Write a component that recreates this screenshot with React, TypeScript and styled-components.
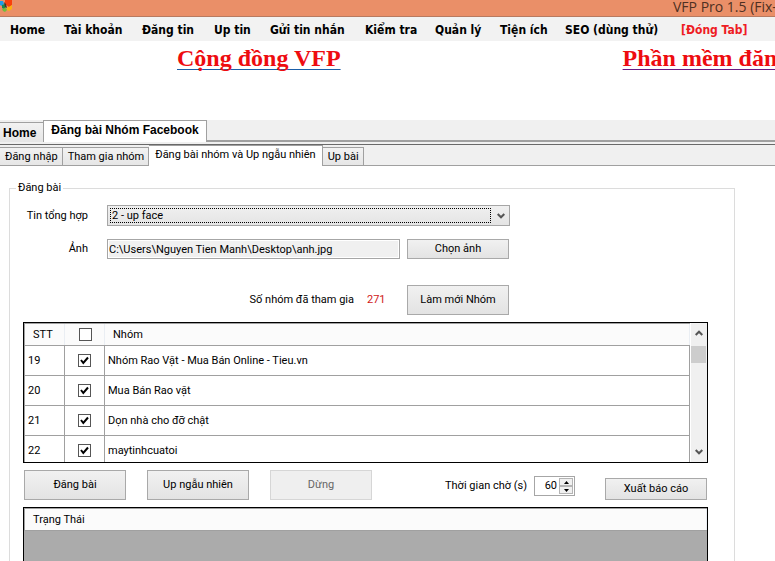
import React from 'react';
import styled, { createGlobalStyle, css } from 'styled-components';

const GlobalStyle = createGlobalStyle`
  *, *::before, *::after { box-sizing: border-box; }
  body { margin: 0; background: #fff; overflow: hidden; }
  button, input, select { font: inherit; color: inherit; border-radius: 0; }
`;

const Window = styled.div`
  height: 100vh;
  display: flex;
  flex-direction: column;
  overflow: hidden;
  background: #fff;
  color: #000;
  font: 11px/14px Roboto, 'Liberation Sans', sans-serif;
`;

const TitleBar = styled.header`
  height: 17px;
  flex: none;
  display: flex;
  align-items: center;
  background: #ea8f68;
  border-bottom: 1px solid #b87a60;
  overflow: hidden;
`;

const Logo = styled.svg`
  flex: none;
  width: 12px;
  height: 12px;
  align-self: flex-start;
`;

const Title = styled.h1`
  margin: 0 0 2px 661px;
  font: 400 14px/20px 'Open Sans', sans-serif;
  white-space: nowrap;
  color: #4e3022;
`;

const MenuBar = styled.nav`
  flex: none;
  height: 24px;
  padding: 1px 0 0 10px;
  display: grid;
  grid-template-columns: 54px 78px 72px 56px 95px 70px 65px 65px 116px 1fr;
  align-items: center;
  background: #f2f2f2;
`;

const MenuItem = styled.button<{ $danger?: boolean }>`
  padding: 0;
  border: 0;
  background: none;
  text-align: left;
  white-space: nowrap;
  font: 700 12px/16px 'DejaVu Sans Condensed', 'Noto Sans', Tahoma, sans-serif;
  color: ${p => (p.$danger ? '#ee1c24' : '#000')};
`;

const Banner = styled.div`
  flex: none;
  height: 79px;
  padding: 1px 0 0 177px;
  display: flex;
  gap: 282px;
  overflow: hidden;
`;

const BannerLink = styled.a<{ $line: string }>`
  font: 700 24px/32px 'Liberation Serif', 'Times New Roman', serif;
  white-space: nowrap;
  color: #ee0c10;
  text-decoration: underline 1px ${p => p.$line};
  text-underline-offset: 3px;
  text-decoration-skip-ink: none;
`;

const DocTabs = styled.div`
  flex: none;
  height: 25px;
  display: flex;
  align-items: flex-start;
  background: linear-gradient(#f0f0f0 20px, #a0a0a0 20px 22px, #f0f0f0 22px 24px, #696969 24px);
`;

const DocTab = styled.button<{ $active?: boolean }>`
  height: 20px;
  margin-top: 2px;
  padding: 0 7px 0 3px;
  border: 1px solid #a0a0a0;
  border-width: 1px 0 0;
  background: linear-gradient(#f2f2f2, #e6e6e6);
  font: 700 12px/16px 'Liberation Sans', Arial, sans-serif;
  white-space: nowrap;
  ${p => p.$active && css`
    height: 22px;
    margin-top: 0;
    padding: 0 7px 3px;
    border-width: 1px 1px 0;
    background: #fff;
  `}
`;

const PageTabs = styled.div`
  flex: none;
  height: 21px;
  display: flex;
  align-items: flex-end;
  background: linear-gradient(#f0f0f0 20px, #a0a0a0 20px);
`;

const PageTab = styled.button<{ $active?: boolean }>`
  height: 19px;
  padding: 0 4px 0 5px;
  border: 1px solid #a0a0a0;
  border-left-width: 0;
  background: linear-gradient(#f2f2f2, #e6e6e6);
  white-space: nowrap;
  ${p => p.$active && css`
    height: 21px;
    padding: 0 6px 3px;
    border-width: 1px 1px 0 0;
    background: #fff;
  `}
`;

const Content = styled.main`
  flex: 1;
  min-height: 0;
  display: flex;
  padding: 15px 40px 0 9px;
`;

const Group = styled.fieldset`
  flex: 1;
  min-width: 0;
  margin: 0;
  padding: 10px 26px 0 13px;
  border: 1px solid #dcdcdc;
  border-bottom: 0;
  display: flex;
  flex-direction: column;
`;

const Legend = styled.legend`
  margin-left: -7px;
  padding: 0 2px;
`;

const FieldRow = styled.div<{ $gap: number }>`
  display: grid;
  grid-template-columns: 65px 293px 102px;
  column-gap: 19px;
  align-items: center;
  margin-bottom: ${p => p.$gap}px;
  & > button { margin-left: -12px; }
`;

const Label = styled.label`
  text-align: right;
  white-space: nowrap;
`;

const SelectWrap = styled.div`
  grid-column: 2 / 4;
  display: grid;
`;

const Select = styled.select`
  grid-area: 1 / 1;
  appearance: none;
  width: 403px;
  height: 21px;
  padding: 0 4px;
  border: 1px solid #a6a6a6;
  background: linear-gradient(#f0f0f0, #e4e4e4);
  outline: none;
`;

const FocusRing = styled.span`
  grid-area: 1 / 1;
  align-self: center;
  width: 381px;
  height: 15px;
  margin-left: 3px;
  border: 1px dotted #000;
  pointer-events: none;
`;

const SelectArrow = styled.span`
  grid-area: 1 / 1;
  place-self: center start;
  margin-left: 390px;
  display: flex;
  pointer-events: none;
`;

const PathInput = styled.input`
  width: 293px;
  height: 20px;
  padding: 0 1px;
  border: 1px solid #a6a6a6;
  background: #f0f0f0;
  box-shadow: inset 0 0 0 1px #fff;
`;

const Button = styled.button<{ $h?: number }>`
  width: 102px;
  height: ${p => p.$h ?? 30}px;
  padding: 0;
  border: 1px solid #a9a9a9;
  background: linear-gradient(#f1f1f1, #e3e3e3);
  white-space: nowrap;
  &:disabled { color: #666; border-color: #d6d6d6; background: #efefef; }
`;

const CountRow = styled.div`
  display: grid;
  grid-template-columns: 331px 40px 102px;
  column-gap: 13px;
  align-items: center;
  margin: 0 0 7px;
  & > button { margin-left: -13px; }
`;

const Count = styled.output`
  color: #d01818;
`;

const GridFrame = styled.div`
  flex: none;
  height: 141px;
  display: grid;
  grid-template-columns: 1fr 17px;
  grid-template-rows: minmax(0, 1fr);
  border: 1px solid #000;
  overflow: hidden;
`;

const Table = styled.table`
  width: 100%;
  border-collapse: separate;
  border-spacing: 0;
  table-layout: fixed;
  border-left: 1px solid #a0a0a0;
`;

const HeadCell = styled.th<{ $w?: number }>`
  width: ${p => (p.$w ? `${p.$w}px` : 'auto')};
  height: 23px;
  padding: 0 8px;
  border: 1px solid #a0a0a0;
  border-width: 1px 0;
  box-shadow: inset -1px 0 #eaeef3;
  background: #fbfbfb;
  font-weight: 400;
  text-align: left;
`;

const Cell = styled.td`
  height: 30px;
  padding: 0 3px;
  border: 1px solid #a0a0a0;
  border-width: 0 1px 1px 0;
`;

const TickLabel = styled.label`
  display: grid;
  justify-content: center;
  & > * { grid-area: 1 / 1; }
`;

const Tick = styled.input`
  appearance: none;
  width: 13px;
  height: 13px;
  margin: 0;
  border: 1px solid #555;
  background: #fff;
  & + svg { visibility: hidden; pointer-events: none; }
  &:checked + svg { visibility: visible; }
`;

const ScrollBar = styled.div`
  display: grid;
  grid-template-rows: 23px 17px 1fr 17px;
  background: #f0f0f0;
  border: 1px solid #fff;
  border-width: 0 0 0 1px;
`;

const ScrollButton = styled.button`
  padding: 0 0 4px;
  border: 0;
  background: none;
  display: flex;
  align-items: center;
  justify-content: center;
`;

const Thumb = styled.div`
  margin-right: 1px;
  background: #cdcdcd;
`;

const Actions = styled.div`
  flex: none;
  height: 44px;
  display: flex;
  align-items: flex-start;
  padding: 7px 1px 0;
`;

const ActionButtons = styled.div`
  display: flex;
  gap: 21px;
`;

const WaitField = styled.div`
  display: flex;
  align-items: center;
  gap: 7px;
  height: 32px;
  margin-left: 73px;
`;

const Spinner = styled.div`
  width: 41px;
  height: 20px;
  padding: 1px;
  display: grid;
  grid-template-columns: 1fr 14px;
  border: 1px solid #a6a6a6;
  background: #fff;
`;

const SpinInput = styled.input`
  min-width: 0;
  padding: 0 2px 0 0;
  border: 0;
  background: none;
  text-align: right;
`;

const SpinButtons = styled.div`
  display: grid;
  grid-template-rows: 1fr 1fr;
`;

const SpinButton = styled.button`
  padding: 0;
  border: 1px solid #b4b4b4;
  background: #f0f0f0;
  display: flex;
  align-items: center;
  justify-content: center;
`;

const Export = styled.div`
  margin: 8px 0 0 auto;
`;

const StatusFrame = styled.div`
  flex: 1;
  min-height: 0;
  border: 1px solid #000;
  border-bottom: 0;
  background: #ababab;
`;

const Chevron = ({ up }: { up?: boolean }) => (
  <svg width="8" height="6" viewBox="0 0 8 6" aria-hidden="true">
    <path d={up ? 'M0.7 5 L4 1.7 L7.3 5' : 'M0.7 1 L4 4.3 L7.3 1'} fill="none" stroke="#555" strokeWidth="2" />
  </svg>
);

const Triangle = ({ up }: { up?: boolean }) => (
  <svg width="5" height="3" viewBox="0 0 5 3" aria-hidden="true">
    <path d={up ? 'M0 3 L2.5 0 L5 3Z' : 'M0 0 L2.5 3 L5 0Z'} fill="#000" />
  </svg>
);

const CheckBox = ({ checked, label }: { checked?: boolean; label: string }) => (
  <TickLabel>
    <Tick type="checkbox" defaultChecked={checked} aria-label={label} />
    <svg width="13" height="13" viewBox="0 0 13 13" aria-hidden="true">
      <path d="M3 6 L5.3 9 L10 3.5" fill="none" stroke="#000" strokeWidth="2" />
    </svg>
  </TickLabel>
);

const menu = ['Home', 'Tài khoản', 'Đăng tin', 'Up tin', 'Gửi tin nhắn', 'Kiểm tra', 'Quản lý', 'Tiện ích', 'SEO (dùng thử)'];

const groups = [
  { id: 19, name: 'Nhóm Rao Vặt - Mua Bán Online - Tieu.vn' },
  { id: 20, name: 'Mua Bán Rao vặt' },
  { id: 21, name: 'Dọn nhà cho đỡ chật' },
  { id: 22, name: 'maytinhcuatoi' },
];

export default function App() {
  return (
    <Window>
      <GlobalStyle />
      <TitleBar>
        <Logo viewBox="0 0 12 12" aria-hidden="true">
          <path d="M0 1h3l1 3-2 2-2-1z" fill="#1e9be8" />
          <path d="M5 0h7v5l-3 2-4-3z" fill="#f8400c" />
          <path d="M2 5l3-1 1 3-2 2-2-1z" fill="#178a50" />
          <path d="M7 7l2 0 3-2v4l-3 2-2-1z" fill="#fbb014" />
          <path d="M2 9l4-1 1 2-2 2-2-1z" fill="#74bd3c" />
          <path d="M4 2l2 2 1 4-2-1z" fill="#453528" />
        </Logo>
        <Title>VFP Pro 1.5 (Fix-</Title>
      </TitleBar>
      <MenuBar>
        {menu.map(m => <MenuItem key={m}>{m}</MenuItem>)}
        <MenuItem $danger>[Đóng Tab]</MenuItem>
      </MenuBar>
      <Banner>
        <BannerLink href="#community" $line="#1b5fa8">Cộng đồng VFP</BannerLink>
        <BannerLink href="#software" $line="#6a1b84">Phần mềm đăng</BannerLink>
      </Banner>
      <DocTabs role="tablist">
        <DocTab role="tab">Home</DocTab>
        <DocTab role="tab" aria-selected $active>Đăng bài Nhóm Facebook</DocTab>
      </DocTabs>
      <PageTabs role="tablist">
        <PageTab role="tab">Đăng nhập</PageTab>
        <PageTab role="tab">Tham gia nhóm</PageTab>
        <PageTab role="tab" aria-selected $active>Đăng bài nhóm và Up ngẫu nhiên</PageTab>
        <PageTab role="tab">Up bài</PageTab>
      </PageTabs>
      <Content>
        <Group>
          <Legend>Đăng bài</Legend>
          <FieldRow $gap={13}>
            <Label htmlFor="feed">Tin tổng hợp</Label>
            <SelectWrap>
              <Select id="feed"><option>2 - up face</option></Select>
              <FocusRing />
              <SelectArrow><Chevron /></SelectArrow>
            </SelectWrap>
          </FieldRow>
          <FieldRow $gap={26}>
            <Label htmlFor="photo">Ảnh</Label>
            <PathInput id="photo" readOnly defaultValue={'C:\\Users\\Nguyen Tien Manh\\Desktop\\anh.jpg'} />
            <Button $h={20}>Chọn ảnh</Button>
          </FieldRow>
          <CountRow>
            <Label htmlFor="joined">Số nhóm đã tham gia</Label>
            <Count id="joined">271</Count>
            <Button>Làm mới Nhóm</Button>
          </CountRow>
          <GridFrame>
            <Table>
              <thead>
                <tr>
                  <HeadCell $w={40}>STT</HeadCell>
                  <HeadCell $w={40}><CheckBox label="Chọn tất cả" /></HeadCell>
                  <HeadCell>Nhóm</HeadCell>
                </tr>
              </thead>
              <tbody>
                {groups.map(g => (
                  <tr key={g.id}>
                    <Cell>{g.id}</Cell>
                    <Cell><CheckBox checked label={g.name} /></Cell>
                    <Cell>{g.name}</Cell>
                  </tr>
                ))}
              </tbody>
            </Table>
            <ScrollBar>
              <ScrollButton aria-label="Lên"><Chevron up /></ScrollButton>
              <Thumb />
              <span />
              <ScrollButton aria-label="Xuống"><Chevron /></ScrollButton>
            </ScrollBar>
          </GridFrame>
          <Actions>
            <ActionButtons>
              <Button>Đăng bài</Button>
              <Button>Up ngẫu nhiên</Button>
              <Button disabled>Dừng</Button>
            </ActionButtons>
            <WaitField>
              <label htmlFor="wait">Thời gian chờ (s)</label>
              <Spinner>
                <SpinInput id="wait" defaultValue="60" />
                <SpinButtons>
                  <SpinButton aria-label="Tăng"><Triangle up /></SpinButton>
                  <SpinButton aria-label="Giảm"><Triangle /></SpinButton>
                </SpinButtons>
              </Spinner>
            </WaitField>
            <Export><Button $h={22}>Xuất báo cáo</Button></Export>
          </Actions>
          <StatusFrame>
            <Table>
              <thead><tr><HeadCell>Trạng Thái</HeadCell></tr></thead>
            </Table>
          </StatusFrame>
        </Group>
      </Content>
    </Window>
  );
}
